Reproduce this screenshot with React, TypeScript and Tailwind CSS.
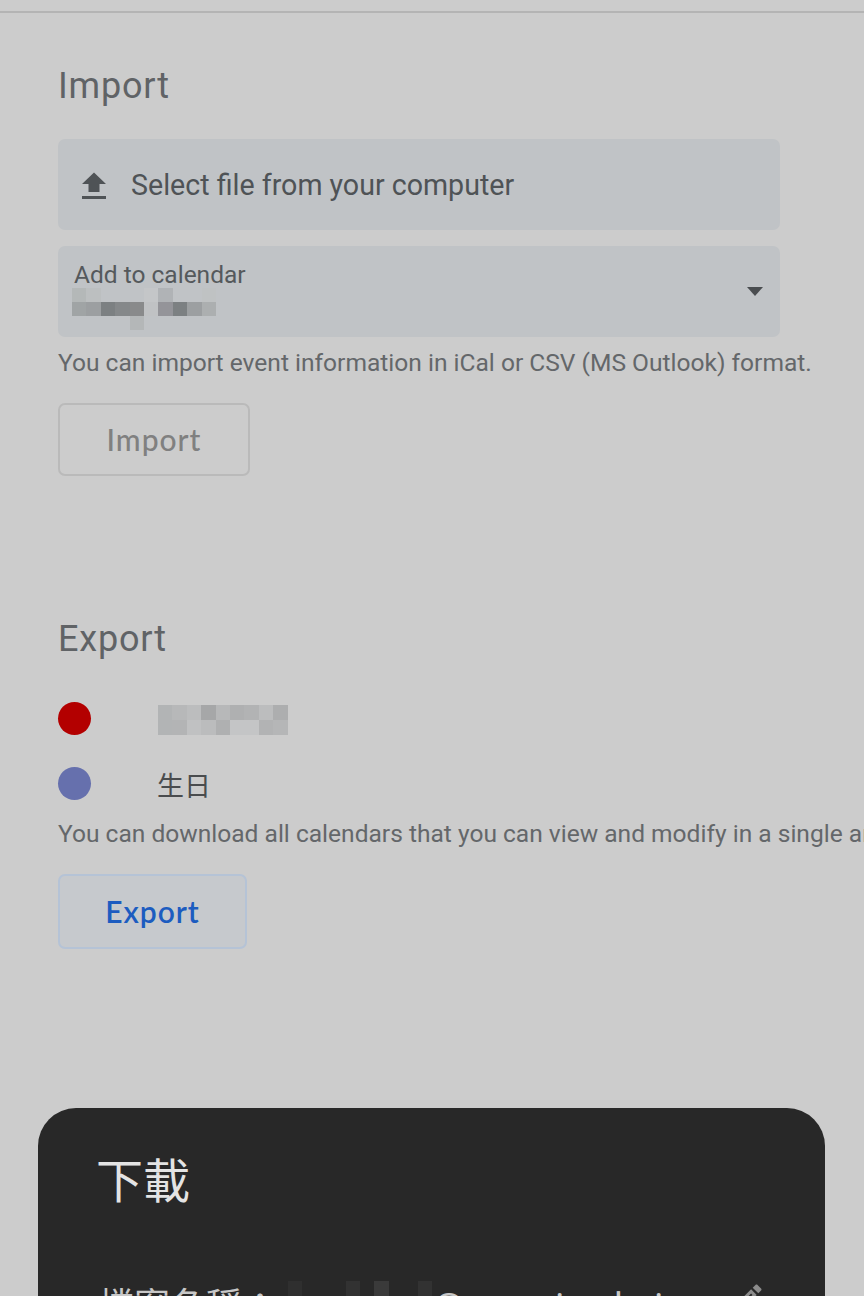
const rowA = [
  ['#b4b8b8', '#bcbfc0', '', '', '', '#c4c6c8', '#b0b3b6', '', '', '#bfc2c3'],
  ['#a0a4a5', '#9c9fa1', '#7c8082', '#85888a', '#898a8b', '#c0c2c4', '#949499', '#7c8082', '#9c9fa1', '#acafb0'],
  ['', '', '', '', '#b4b7b8', '', '', '', '', ''],
];

const rowB = [
  ['#b2b4b5', '#b7b8b9', '#bcbdbe', '#a6a7a8', '#b7b8b9', '#afb0b1', '#b2b3b4', '#bcbdbe', '#adaeaf'],
  ['#b2b4b5', '#b3b4b5', '#c0c1c2', '#bbbcbd', '#afb0b1', '#c4c5c6', '#c4c5c6', '#b2b3b4', '#b5b6b7'],
];

const rowC = [['#2f2f2f', '', '', '', '#323232', '', '#3a3a3a', '', '', '#323232']];

function Mosaic({ rows, cellH, className }: { rows: string[][]; cellH: number; className?: string }) {
  return (
    <div className={className}>
      {rows.map((row, i) => (
        <div key={i} className="flex">
          {row.map((c, j) => (
            <div key={j} className="w-[14.4px]" style={{ height: cellH, backgroundColor: c || 'transparent' }} />
          ))}
        </div>
      ))}
    </div>
  );
}

function UploadIcon() {
  return (
    <svg width="24" height="30" viewBox="0 0 24 30" className="text-[#4f5356]">
      <path fill="currentColor" d="M12 2.5 L24 14 H17.5 V22 H6.5 V14 H0 Z" />
      <rect x="0" y="26" width="24" height="3" fill="currentColor" />
    </svg>
  );
}

function EditIcon() {
  return (
    <svg width="36" height="36" viewBox="0 0 24 24" className="text-[#8c8c8c]">
      <path
        fill="currentColor"
        d="M14.06 9.02l.92.92L5.92 19H5v-.92l9.06-9.06M17.66 3c-.25 0-.51.1-.7.29l-1.83 1.83 3.75 3.75 1.83-1.83c.39-.39.39-1.02 0-1.41l-2.34-2.34c-.2-.2-.45-.29-.71-.29zm-3.6 3.19L3 17.25V21h3.75L17.81 9.94l-3.75-3.75z"
      />
    </svg>
  );
}

export default function App() {
  return (
    <div className="relative h-[1296px] w-[864px] overflow-hidden bg-[#cccccc] font-['Roboto',sans-serif]">
      <div className="mt-[11px] h-[2px] bg-[#b4b4b4]" />

      <main className="pl-[58px]">
        <section>
          <h2 className="mt-[49px] text-[36px] leading-[48px] tracking-[0.8px] text-[#606366]">Import</h2>
          <button className="mt-[29px] flex h-[91px] w-[722px] items-center gap-[25px] rounded-[7px] bg-[#c0c3c6] pl-[24px]">
            <UploadIcon />
            <span className="mt-[2px] text-[28.6px] text-[#4f5356]">Select file from your computer</span>
          </button>
          <div className="relative mt-[16px] h-[91px] w-[722px] rounded-[7px] bg-[#c0c3c6] pl-[16px] pt-[15px]">
            <div className="text-[24.5px] leading-[27px] text-[#55595c]">Add to calendar</div>
            <Mosaic rows={rowA} cellH={14} className="-ml-[2px]" />
            <div className="absolute right-[17px] top-[41px] h-0 w-0 border-x-[8.5px] border-t-[9px] border-x-transparent border-t-[#4a4d50]" />
          </div>
          <p className="mt-[11px] whitespace-nowrap text-[24.55px] leading-[30px] text-[#64676a]">
            You can import event information in iCal or CSV (MS Outlook) format.
          </p>
          <button className="mt-[25px] h-[73px] w-[192px] rounded-[7px] border-2 border-[#bababa] font-['Lato',sans-serif] text-[30px] font-medium tracking-[1px] text-[#808080]">
            Import
          </button>
        </section>

        <section>
          <h2 className="mt-[139px] text-[36px] leading-[48px] tracking-[0.8px] text-[#606366]">Export</h2>
          <div className="mt-[38px] flex h-[34px] items-center">
            <div className="h-[33px] w-[33px] rounded-full bg-[#b30000]" />
            <Mosaic rows={rowB} cellH={15} className="ml-[67px] mt-[4px]" />
          </div>
          <div className="mt-[31px] flex h-[34px] items-center">
            <div className="h-[33px] w-[33px] rounded-full bg-[#6670ad]" />
            <span className="ml-[66px] mt-[4px] font-['Noto_Sans_CJK_TC',sans-serif] text-[27px] text-[#4a4c4e]">生日</span>
          </div>
          <p className="mt-[19px] whitespace-nowrap text-[24.55px] leading-[30px] text-[#64676a]">
            You can download all calendars that you can view and modify in a single archive.
          </p>
          <button className="mt-[25px] h-[75px] w-[189px] rounded-[7px] border-2 border-[#b5c3d6] bg-[#c6c9cd] font-['Lato',sans-serif] text-[30px] font-semibold tracking-[1px] text-[#1c5cc0]">
            Export
          </button>
        </section>
      </main>

      <div className="absolute left-[38px] top-[1108px] h-[240px] w-[787px] rounded-[38px] bg-[#282828] pl-[60px] pt-[42px]">
        <h3 className="-ml-[2px] font-['Noto_Sans_CJK_TC',sans-serif] text-[47px] leading-[56px] text-[#e4e4e4]">下載</h3>
        <div className="mt-[72px] flex w-[668px] items-start font-['Noto_Sans_CJK_TC',sans-serif] text-[36px] leading-[50px] text-[#c8c8c8]">
          <span>檔案名稱：</span>
          <Mosaic rows={rowC} cellH={40} className="ml-[10px] mt-[3px]" />
          <span className="mt-[4px] font-['Roboto',sans-serif]">@omeni.nolmi</span>
          <div className="ml-auto mt-[2px]">
            <EditIcon />
          </div>
        </div>
      </div>
    </div>
  );
}
